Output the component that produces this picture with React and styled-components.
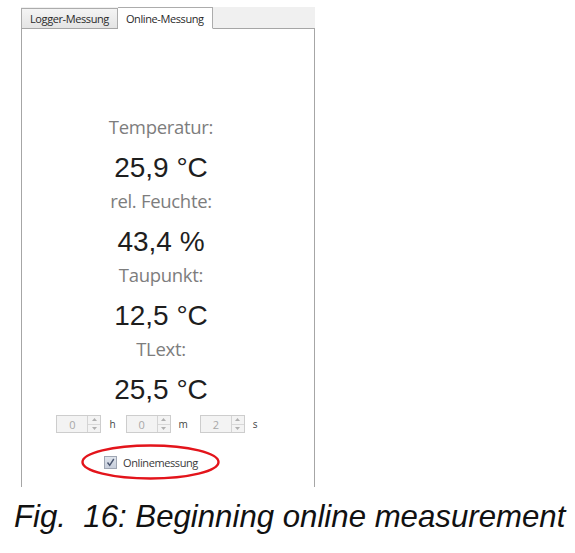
import React from 'react';
import styled, { createGlobalStyle } from 'styled-components';

const GlobalStyle = createGlobalStyle`
  html, body {
    margin: 0;
    padding: 0;
    background: #ffffff;
  }
`;

const Page = styled.div`
  width: 575px;
  height: 553px;
  padding: 7px 0 0 21px;
  box-sizing: border-box;
  display: flex;
  flex-direction: column;
`;

const Window = styled.div`
  width: 294px;
  display: flex;
  flex-direction: column;
`;

const TabStrip = styled.div`
  height: 22px;
  display: flex;
  align-items: flex-end;
  background: #f0f0f0;
  border-bottom: 1px solid #a6a6a6;
  box-sizing: border-box;
`;

const Tab = styled.div`
  height: ${p => (p.$active ? '22px' : '20px')};
  padding: 0 8px;
  display: flex;
  align-items: center;
  box-sizing: border-box;
  font-family: "Open Sans", "Noto Sans", sans-serif;
  font-size: 11px;
  letter-spacing: -0.4px;
  color: #2a2a2a;
  background: ${p => (p.$active ? '#ffffff' : 'linear-gradient(#f4f4f4, #e4e4e4)')};
  border: 1px solid #acacac;
  border-bottom: ${p => (p.$active ? '1px solid #ffffff' : 'none')};
  margin-bottom: ${p => (p.$active ? '-1px' : '0')};
  border-left: ${p => (p.$active ? 'none' : '1px solid #acacac')};
`;

const Body = styled.div`
  height: 458px;
  border-left: 1px solid #a6a6a6;
  border-right: 1px solid #a6a6a6;
  box-sizing: border-box;
  padding: 85px 14px 0 0;
  display: flex;
  flex-direction: column;
  align-items: center;
`;

const Label = styled.div`
  font-family: "Open Sans", "Noto Sans", sans-serif;
  font-size: 18.5px;
  line-height: 26px;
  color: #7d7d7d;
  letter-spacing: -0.3px;
`;

const Value = styled.div`
  font-family: "Liberation Sans", Arial, sans-serif;
  font-size: 28px;
  line-height: 40px;
  margin-top: 8px;
  color: #1e1e1e;
`;

const TimerRow = styled.div`
  display: flex;
  align-items: center;
  gap: 8px;
  margin-top: 5px;
  margin-right: 6px;
  font-family: "Open Sans", "Noto Sans", sans-serif;
  font-size: 10px;
  color: #444;
`;

const Spin = styled.div`
  width: 45px;
  height: 18px;
  box-sizing: border-box;
  border: 1px solid #cdcdcd;
  background: #f3f3f3;
  display: flex;
`;

const SpinValue = styled.div`
  flex: 1;
  display: flex;
  align-items: center;
  justify-content: center;
  font-family: "Open Sans", "Noto Sans", sans-serif;
  font-size: 11px;
  color: #a8a8a8;
`;

const SpinButtons = styled.div`
  width: 12px;
  border-left: 1px solid #d4d4d4;
  display: flex;
  flex-direction: column;
`;

const SpinArrow = styled.div`
  flex: 1;
  display: flex;
  align-items: center;
  justify-content: center;
  border-top: ${p => (p.$down ? '1px solid #d8d8d8' : 'none')};
`;

const Unit = styled.span`
  margin-right: ${p => p.$gap || 2}px;
`;

const CheckRow = styled.label`
  position: relative;
  display: flex;
  align-items: center;
  gap: 6px;
  margin-top: 22px;
  margin-right: 20px;
  font-family: "Open Sans", "Noto Sans", sans-serif;
  font-size: 11px;
  letter-spacing: -0.4px;
  color: #3a3a3a;
`;

const Box = styled.span`
  width: 13px;
  height: 13px;
  box-sizing: border-box;
  border: 1px solid #9fa6b3;
  background: linear-gradient(#dfe4ec, #c7cedb);
  display: flex;
  align-items: center;
  justify-content: center;
`;

const Ring = styled.svg`
  position: absolute;
  left: -22px;
  top: -10px;
  overflow: visible;
`;

const Caption = styled.div`
  margin-top: 12px;
  margin-left: -7px;
  font-family: "Liberation Sans", Arial, sans-serif;
  font-style: italic;
  font-size: 31.2px;
  color: #111;
  white-space: pre;
`;

const Arrow = ({ down }) => (
  <svg width="5" height="3" viewBox="0 0 5 3">
    <path d={down ? 'M0 0 L5 0 L2.5 3 Z' : 'M0 3 L5 3 L2.5 0 Z'} fill="#b0b0b0" />
  </svg>
);

const SpinBox = ({ value }) => (
  <Spin>
    <SpinValue>{value}</SpinValue>
    <SpinButtons>
      <SpinArrow><Arrow /></SpinArrow>
      <SpinArrow $down><Arrow down /></SpinArrow>
    </SpinButtons>
  </Spin>
);

const readings = [
  { label: 'Temperatur:', value: '25,9 °C' },
  { label: 'rel. Feuchte:', value: '43,4 %' },
  { label: 'Taupunkt:', value: '12,5 °C' },
  { label: 'TLext:', value: '25,5 °C' },
];

export default function App() {
  return (
    <>
      <GlobalStyle />
      <Page>
        <Window>
          <TabStrip>
            <Tab>Logger-Messung</Tab>
            <Tab $active>Online-Messung</Tab>
          </TabStrip>
          <Body>
            {readings.map(r => (
              <React.Fragment key={r.label}>
                <Label>{r.label}</Label>
                <Value>{r.value}</Value>
              </React.Fragment>
            ))}
            <TimerRow>
              <SpinBox value="0" />
              <Unit>h</Unit>
              <SpinBox value="0" />
              <Unit $gap={4}>m</Unit>
              <SpinBox value="2" />
              <Unit>s</Unit>
            </TimerRow>
            <CheckRow>
              <Box>
                <svg width="9" height="9" viewBox="0 0 9 9">
                  <path d="M1.5 4.5 L3.7 7.3 L7.8 1" fill="none" stroke="#4a5670" strokeWidth="1.4" />
                </svg>
              </Box>
              Onlinemessung
              <Ring width="137" height="34">
                <ellipse cx="68.5" cy="17" rx="68" ry="16.5" fill="none" stroke="#e3141b" strokeWidth="2.4" />
              </Ring>
            </CheckRow>
          </Body>
        </Window>
        <Caption>{'Fig.  16: Beginning online measurement'}</Caption>
      </Page>
    </>
  );
}
